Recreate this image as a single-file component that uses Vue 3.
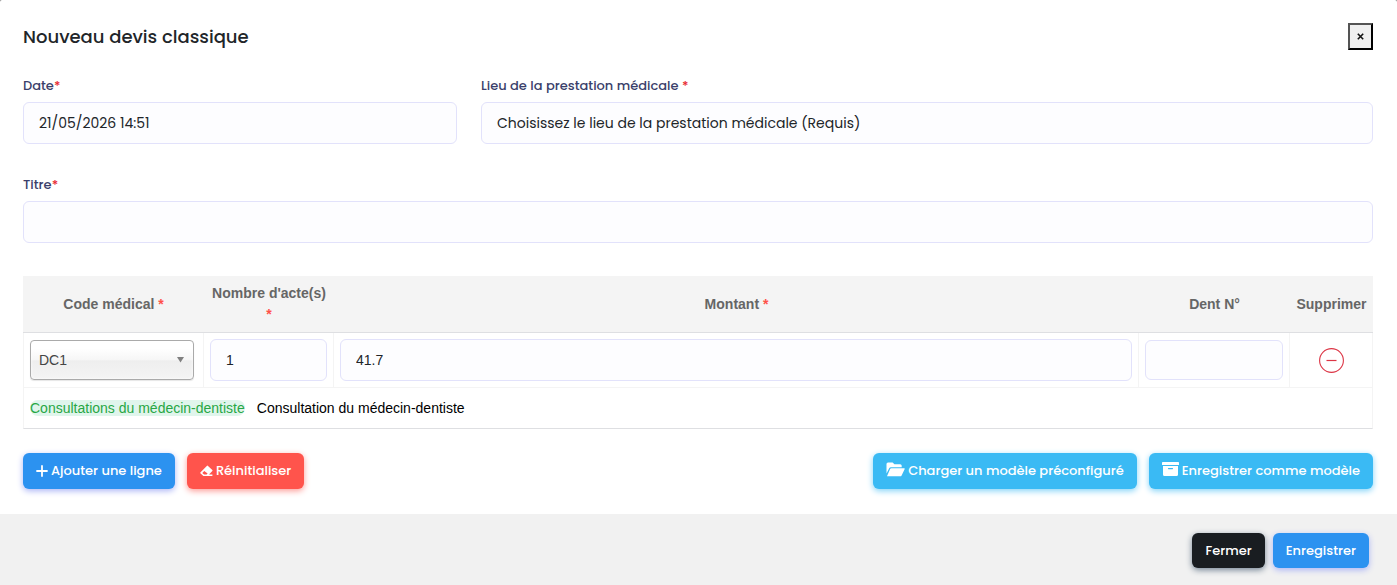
<script setup>
import { reactive, ref } from 'vue'

const date = ref('21/05/2026 14:51')
const place = ref('')
const title = ref('')

const blankLine = () => ({
  code: 'DC1',
  count: '1',
  amount: '41.7',
  tooth: '',
  category: 'Consultations du médecin-dentiste',
  label: 'Consultation du médecin-dentiste',
})
const lines = reactive([blankLine()])

const addLine = () => lines.push(blankLine())
const removeLine = (i) => lines.splice(i, 1)
const reset = () => {
  lines.splice(0, lines.length, blankLine())
  title.value = ''
}
</script>

<template>
  <form class="modal" @submit.prevent>
    <header class="modal-head">
      <h1>Nouveau devis classique</h1>
      <button type="button" class="close" aria-label="Fermer la fenêtre">
        <svg width="7" height="7" viewBox="0 0 7 7" aria-hidden="true"><path d="M.8 .8 6.2 6.2M6.2 .8 .8 6.2" stroke="#111" stroke-width="1.6" /></svg>
      </button>
    </header>

    <div class="fields">
      <div class="field third">
        <label for="date">Date<span class="req">*</span></label>
        <input id="date" v-model="date" class="control" type="text">
      </div>
      <div class="field rest">
        <label for="place">Lieu de la prestation médicale <span class="req">*</span></label>
        <select id="place" v-model="place" class="control">
          <option value="">Choisissez le lieu de la prestation médicale (Requis)</option>
        </select>
      </div>
      <div class="field full">
        <label for="title">Titre<span class="req">*</span></label>
        <input id="title" v-model="title" class="control" type="text">
      </div>
    </div>

    <table>
      <colgroup>
        <col class="c-code"><col class="c-count"><col><col class="c-tooth"><col class="c-del">
      </colgroup>
      <thead>
        <tr>
          <th scope="col">Code médical <span class="star">*</span></th>
          <th scope="col">Nombre d'acte(s) <span class="star">*</span></th>
          <th scope="col">Montant <span class="star">*</span></th>
          <th scope="col">Dent N°</th>
          <th scope="col">Supprimer</th>
        </tr>
      </thead>
      <tbody v-for="(line, i) in lines" :key="i">
        <tr class="entry">
          <td>
            <div class="code">
              <select v-model="line.code" aria-label="Code médical"><option>DC1</option></select>
              <svg width="7" height="6" viewBox="0 0 7 6" aria-hidden="true"><path d="M0 0h7L3.5 5.6z" fill="#808080" /></svg>
            </div>
          </td>
          <td><input v-model="line.count" class="control" type="text" aria-label="Nombre d'actes"></td>
          <td><input v-model="line.amount" class="control" type="text" aria-label="Montant"></td>
          <td><input v-model="line.tooth" class="control short" type="text" aria-label="Dent N°"></td>
          <td class="center">
            <button type="button" class="remove" aria-label="Supprimer la ligne" @click="removeLine(i)">
              <svg width="25" height="25" viewBox="0 0 25 25" fill="none" stroke="#dc3545" aria-hidden="true">
                <circle cx="12.5" cy="12.5" r="11.9" stroke-width="1.1" />
                <path d="M7.500 12.500h10" stroke-width="1.2" />
              </svg>
            </button>
          </td>
        </tr>
        <tr class="detail">
          <td colspan="5"><span class="tag">{{ line.category }}</span><span>{{ line.label }}</span></td>
        </tr>
      </tbody>
    </table>

    <div class="actions">
      <button type="button" class="btn blue" @click="addLine">
        <svg width="12" height="12" viewBox="0 0 12 12" aria-hidden="true"><path d="M6 1v10M1 6h10" stroke="#fff" stroke-width="1.800" stroke-linecap="round" /></svg>
        Ajouter une ligne
      </button>
      <button type="button" class="btn red" @click="reset">
        <svg width="13" height="12" viewBox="0 0 13 12" aria-hidden="true">
          <path fill="#fff" fill-rule="evenodd" d="M8 .9 12.300 4.900a.9.9 0 0 1 0 1.200L9 9.500h3.400v1.600H3.400L.6 8.600a1 1 0 0 1 0-1.400L6.800 .9a.8.8 0 0 1 1.200 0zM4.300 5.900 2.300 8l1.800 1.500h2.500l1-1z" />
        </svg>
        Réinitialiser
      </button>
      <span class="spacer"></span>
      <button type="button" class="btn sky">
        <svg class="big" width="19" height="15" viewBox="0 0 19 15" aria-hidden="true">
          <path fill="#fff" d="M.5 11.5V2A1.5 1.5 0 0 1 2 .5h4.6l1.8 1.7h5.8a1.5 1.5 0 0 1 1.5 1.5v1.5H5a2 2 0 0 0-1.8 1zM1 14.3 4.1 7.1a1.5 1.5 0 0 1 1.3-.9h12.6c.6 0 .9.5.6 1l-3 6.2a1.5 1.5 0 0 1-1.4.9z" />
        </svg>
        Charger un modèle préconfiguré
      </button>
      <button type="button" class="btn sky">
        <svg class="big" width="17" height="15" viewBox="0 0 17 15" aria-hidden="true">
          <path fill="#fff" d="M.8 0h15.400a.8.8 0 0 1 .8.8V3H0V.8A.8.8 0 0 1 .8 0z" />
          <path fill="#fff" fill-rule="evenodd" d="M1 4h15v8.500a1.500 1.500 0 0 1-1.500 1.500h-12A1.500 1.500 0 0 1 1 12.500zM6.500 6a.5.5 0 0 0 0 1.200h4a.5.5 0 0 0 0-1.200z" />
        </svg>
        Enregistrer comme modèle
      </button>
    </div>

    <footer>
      <button type="button" class="btn dark">Fermer</button>
      <button type="submit" class="btn blue">Enregistrer</button>
    </footer>
  </form>
</template>

<style>
body {
  background: #808080;
}
</style>

<style scoped>
.modal {
  --ui: Poppins, Inter, "Open Sans", sans-serif;
  --table: "Liberation Sans", Arial, sans-serif;
  display: flex;
  flex-direction: column;
  min-height: 100vh;
  background: #fff;
  border-radius: 2px 2px 0 0;
  font-family: var(--ui);
  color: #212529;
}
* {
  box-sizing: border-box;
}
.modal-head {
  display: flex;
  justify-content: space-between;
  align-items: center;
  padding: 23px 24px 0 23px;
}
h1 {
  margin: 0;
  font-size: 18px;
  line-height: 27px;
  font-weight: 500;
}
.close {
  display: grid;
  place-items: center;
  width: 25px;
  height: 27px;
  padding: 0;
  background: #efefef;
  border: 2px outset #000;
}
.fields {
  display: grid;
  grid-template-columns: repeat(12, 1fr);
  gap: 31px 24px;
  padding: 26px 24px 0 23px;
}
.third {
  grid-column: span 4;
}
.rest {
  grid-column: span 8;
}
.full {
  grid-column: span 12;
}
label {
  display: block;
  margin-bottom: 6px;
  font-size: 13px;
  line-height: 20px;
  font-weight: 500;
  color: #3b3f6b;
}
.req {
  color: #e8292f;
}
.control {
  display: block;
  width: 100%;
  height: 42px;
  padding: 0 15px;
  border: 1px solid #e2e2fb;
  border-radius: 6px;
  background: #fdfdff;
  color: #212529;
  font-family: var(--ui);
  font-size: 14px;
  appearance: none;
  outline: none;
}
table {
  align-self: stretch;
  margin: 33px 24px 0 23px;
  border-collapse: separate;
  border-spacing: 0;
  table-layout: fixed;
  font-family: var(--table);
  font-size: 14px;
}
.c-code {
  width: 181px;
}
.c-count {
  width: 130px;
}
.c-tooth {
  width: 151px;
}
.c-del {
  width: 83px;
}
th {
  height: 57px;
  padding: 0 4px;
  background: #f4f4f4;
  border-bottom: 1px solid #dedfe2;
  color: #666;
  font-weight: 700;
  line-height: 21px;
}
.star {
  color: #ff5148;
}
td {
  padding: 6px;
  border-right: 1px solid #f4f4f4;
  border-bottom: 1px solid #f4f4f4;
}
td:first-child {
  border-left: 1px solid #f4f4f4;
}
td .control {
  font-family: var(--table);
}
td .short {
  height: 40px;
}
.code {
  display: grid;
  align-items: center;
  width: 164px;
}
.code select,
.code svg {
  grid-area: 1 / 1;
}
.code svg {
  justify-self: end;
  margin-right: 10px;
  pointer-events: none;
}
.code select {
  width: 100%;
  height: 40px;
  padding: 0 8px;
  border: 1px solid #aaa;
  border-radius: 4px;
  background: linear-gradient(#fff 20%, #f6f6f6 50%, #eee 52%, #f4f4f4 100%);
  box-shadow: inset 0 0 3px #fff, 0 1px 1px rgba(0, 0, 0, 0.1);
  appearance: none;
  color: #444;
  font-family: var(--table);
  font-size: 14px;
}
.center {
  text-align: center;
}
.remove {
  display: inline-block;
  padding: 0;
  border: 0;
  background: none;
  vertical-align: middle;
}
.remove svg {
  display: block;
}
.detail td {
  height: 41px;
  border-bottom-color: #dedfe2;
  color: #000;
  line-height: 16px;
}
.tag {
  margin-right: 12px;
  border-radius: 8px;
  background: #e0f5ec;
  color: #28a745;
}
.actions {
  display: flex;
  flex-wrap: wrap;
  gap: 12px;
  padding: 24px 24px 25px 23px;
}
.spacer {
  flex: 1;
}
.btn {
  display: flex;
  align-items: center;
  gap: 3px;
  height: 36px;
  padding: 0 13px;
  border: 0;
  border-radius: 6px;
  color: #fff;
  font-family: var(--ui);
  font-size: 13px;
  font-weight: 500;
  white-space: nowrap;
}
.big {
  margin-bottom: 3px;
}
.blue {
  background: #2c92f0;
  box-shadow: 0 2px 6px #acb5f6;
}
.red {
  background: #ff544c;
  box-shadow: 0 2px 6px #fd9b96;
}
.sky {
  background: #3abaf4;
  box-shadow: 0 2px 6px #82d3f8;
}
.dark {
  background: #191d21;
  box-shadow: 0 2px 6px #728394;
}
footer {
  display: flex;
  flex: 1;
  justify-content: flex-end;
  align-items: flex-start;
  gap: 8px;
  padding: 19px 28px 17px;
  background: #f1f1f1;
}
footer .btn {
  height: 35px;
}
</style>
